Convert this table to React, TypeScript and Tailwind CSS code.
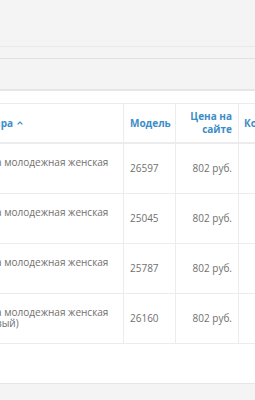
import React from 'react';

type Row = { name: string[]; model: string; price: string };

const rows: Row[] = [
  { name: ['Майка молодежная женская'], model: '26597', price: '802 руб.' },
  { name: ['Майка молодежная женская'], model: '25045', price: '802 руб.' },
  { name: ['Майка молодежная женская'], model: '25787', price: '802 руб.' },
  { name: ['Майка молодежная женская', '(розовый)'], model: '26160', price: '802 руб.' },
];

const SortUp = () => (
  <svg width="6" height="4" viewBox="0 0 6 4" className="ml-[4px] shrink-0 text-[#3c8dc8]">
    <path d="M0.6 3.4 L3 1 L5.4 3.4" fill="none" stroke="currentColor" strokeWidth="1.2" />
  </svg>
);

const App = () => {
  return (
    <div className="w-[255px] h-[400px] overflow-hidden bg-white flex flex-col font-['Open_Sans',sans-serif]">
      <div className="h-[47px] shrink-0 bg-[#f4f4f4] border-b border-[#e9e9e9]" />
      <div className="h-[12px] shrink-0 bg-[#f4f4f4] border-b border-[#e1e1e1]" />
      <div className="h-[32px] shrink-0 bg-[#f4f4f4] border-b-2 border-[#e6e6e6]" />
      <div className="h-[12px] shrink-0" />

      <div className="ml-[-36px] w-[400px] shrink-0 border-t border-[#ececec] text-[10px]">
        <div className="flex h-[40px] border-b-2 border-[#ececec] font-bold text-[#3c8dc8]">
          <div className="w-[160px] shrink-0 border-r border-[#ececec] pl-[6px] flex items-center">
            <div className="w-[43px] shrink-0 flex justify-end whitespace-nowrap">Название товара</div>
            <SortUp />
          </div>
          <div className="w-[52px] shrink-0 border-r border-[#ececec] pl-[6px] flex items-center">Модель</div>
          <div className="w-[63px] shrink-0 border-r border-[#ececec] pr-[6px] flex items-center justify-end text-right leading-[13px]">
            Цена на<br />сайте
          </div>
          <div className="flex-1 pl-[5px] flex items-center whitespace-nowrap">Количество</div>
        </div>

        {rows.map((r) => (
          <div key={r.model} className="flex h-[50px] border-b border-[#ececec] text-[#707070]">
            <div className="w-[160px] shrink-0 border-r border-[#ececec] pl-[6px] pt-[13px] flex flex-col leading-[11px]">
              {r.name.map((line) => (
                <div key={line} className="whitespace-nowrap">{line}</div>
              ))}
            </div>
            <div className="w-[52px] shrink-0 border-r border-[#ececec] pl-[6px] flex items-center">{r.model}</div>
            <div className="w-[63px] shrink-0 border-r border-[#ececec] pr-[6px] flex items-center justify-end">{r.price}</div>
            <div className="flex-1" />
          </div>
        ))}
      </div>

      <div className="h-[39px] shrink-0" />
      <div className="flex-1 bg-[#f4f4f4] border-t border-[#e6e6e6]" />
    </div>
  );
};

export default App;
